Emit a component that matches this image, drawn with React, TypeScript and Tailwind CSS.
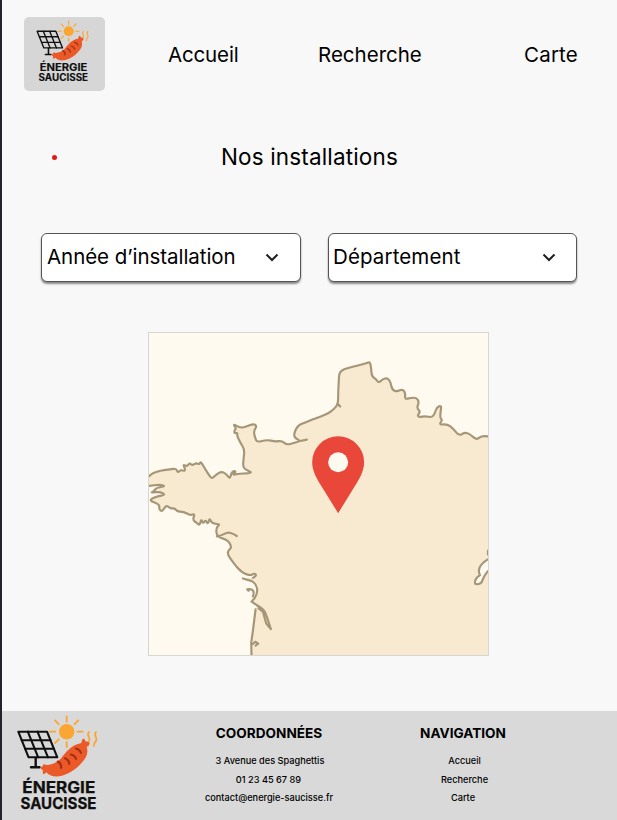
import React from "react";

function Logo({ className }: { className: string }) {
  return (
    <svg viewBox="15 8 86 98" className={"overflow-visible " + className} aria-label="Énergie Saucisse">
      <g stroke="#fba632" strokeWidth="1.8" strokeLinecap="round" fill="none">
        <path d="M66.700 11.500v5.300M66.700 37v5M50 26.700h5.300M77.500 26.700h5.200M55 15.300l3.700 3.900M78.300 15.300l-3.800 3.900M55 38l3.700-3.700" />
        <path d="M89 27c-3.500 4 2.500 5 0 9c-1.500 2-1.500 3-1 5M96 27c-3.500 4 2.500 5 0 9c-2 2-2.500 3-2 5" />
      </g>
      <circle cx="66.700" cy="26.700" r="7.700" fill="#fba632" />
      <g stroke="#101010" fill="none" strokeWidth="2.100" strokeLinejoin="round" strokeLinecap="round">
        <path d="M18.300 26.700H47L57.300 52.300H28.600Z" />
        <path d="M27.800 26.700L38.200 52.300M37.500 26.700L48 52.300M21.700 35.200H50.500M25 43.700H54" />
        <path d="M35.700 53v9.300M31 62.300h8.500" strokeWidth="2.400" />
      </g>
      <path
        d="M46 60C53 59.500 57 57.500 61 53.500C66 47 71 40 80.500 38.200C81.800 37.700 81.700 36.500 82 35C82.800 33 85.200 33.500 85 36C87 36.800 89.600 36.500 89.600 38.500C89.500 40.800 87 40.500 86.800 42C88.500 48 86.500 53 81.500 58C76 64.500 69 68.800 62 70.700C56 72.200 50 71.500 46.500 67.500C45.500 67 45 69.500 43.500 69C42 68.500 43.500 66 42.500 65C41.500 64 40.500 64 40.700 62.500C41 61.500 42.500 62 42.800 61C42.500 59.500 44.500 58.500 46 60Z"
        fill="#eb5929"
      />
      <path
        d="M57.800 56.500q4.200 2.500 3.200 6.500M65 53.300q4 1.800 4.300 5.500M70.800 49.500q4.200 .8 5.200 4.500M75.800 43.500q4 .8 5.200 4.500"
        stroke="#a52d12"
        strokeWidth="2.100"
        fill="none"
        strokeLinecap="round"
      />
      <g fill="#101010" stroke="#101010" strokeWidth="0.250" fontFamily="Inter, sans-serif" fontWeight="700" fontSize="15.500">
        <text x="22.300" y="88" textLength="73" lengthAdjust="spacingAndGlyphs">ÉNERGIE</text>
        <text x="20.500" y="103.700" textLength="76" lengthAdjust="spacingAndGlyphs">SAUCISSE</text>
      </g>
    </svg>
  );
}

/* Softens a polyline written as "x,y x,y ..." by curving through the segment midpoints. */
function smooth(points: string) {
  const p = points.split(" ").map((s) => s.split(",").map(Number));
  let d = `M${p[0][0]} ${p[0][1]}`;
  for (let i = 1; i < p.length - 1; i++) {
    const a = p[i];
    const b = p[i + 1];
    d += `Q${a[0]} ${a[1]} ${(a[0] + b[0]) / 2} ${(a[1] + b[1]) / 2}`;
  }
  const last = p[p.length - 1];
  return d + `L${last[0]} ${last[1]}`;
}

const NORTH = smooth(
  "24,455 34,445 60,436 92,432 108,430 112,443 122,434 132,438 135,432 128,417 140,424 148,413 156,421 168,413 178,418 181,408 195,432 207,451 215,461 227,449 243,439 258,446 269,462 273,443 281,437 287,440 276,450 300,445 320,445 336,442 318,434 308,426 310,400 313,372 300,352 290,330 292,322 282,324 283,314 288,310 278,295 300,308 320,303 340,295 350,302 340,318 345,338 350,351 380,343 405,349 425,346 440,359 460,353 482,347 466,339 461,330 466,312 476,299 490,293 515,283 540,274 565,263 580,252 594,236 594,200 596,165 597,144 604,134 620,127 650,120 680,112 690,108 693,128 695,152 708,160 716,172 728,160 742,157 751,168 756,192 770,198 788,190 796,203 794,221 812,217 830,216 837,230 830,248 841,258 832,270 838,275 855,272 875,276 884,265 890,245 904,240 902,255 900,278 907,284 897,298 922,296 940,310 957,332 975,320 992,328 1010,344 1026,330 1060,336"
);
const BRITTANY =
  "338,760 350,753 342,746 332,753 312,748 300,738 290,728 278,712 262,690 264,677 275,668 262,645 230,637 227,608 240,598 220,597 212,590 208,580 203,599 196,585 188,597 183,582 178,602 170,594 157,586 164,566 150,572 130,560 110,560 104,550 90,551 78,540 66,560 56,554 58,538 24,526 50,514 76,510 60,500 30,503 40,500 48,488 76,484 60,478 24,483";
const WEST_LINE = smooth(BRITTANY);
const WEST_FILL = smooth("340,820 354,800 354,780 335,768 308,762 " + BRITTANY).replace("M", "L");

function FranceMap() {
  return (
    <svg viewBox="26 21 1018 972" preserveAspectRatio="none" className="block h-full w-full">
      <rect x="0" y="0" width="1100" height="1020" fill="#fefaef" />
      <path d={NORTH + "L1060 1010L334 1010L333 955L338 920L346 855L352 845L334 832" + WEST_FILL + "Z"} fill="#f8e9d1" />
      <g fill="none" stroke="#a59677" strokeWidth="6.500" strokeLinejoin="round" strokeLinecap="round">
        <path d={NORTH} />
        <path d="M334 1000L333 955L338 920L346 855" />
        <path d="M358 848L334 832L344 820C356 800 352 780 335 770L308 762M338 816C344 800 338 792 321 795L325 799" />
        <path d={WEST_LINE} />
        <path d="M480 347L500 343M594 236L600 243M230 635C250 632 255 622 268 624Q282 627 290 634" />
        <path d="M352 845C368 850 376 862 380 878L392 915L378 898L368 862L355 852M337 960L345 953L354 959L346 965" />
        <path d="M1060 696C1022 712 1010 733 1020 752C1008 760 1002 768 1006 778C1016 782 1026 776 1028 766C1033 755 1038 742 1050 736" fill="#fefaef" />
        <path d="M1044 678V690" />
      </g>
      <path d="M594 565L551 495C532 464 516 440 516 411a78 78 0 0 1 156 0C672 440 656 464 637 495Z" fill="#e94739" />
      <circle cx="594" cy="411" r="30" fill="#fffaf0" />
    </svg>
  );
}

function Select({ label, className }: { label: string; className: string }) {
  return (
    <button
      className={
        "flex h-[49px] items-center justify-between rounded-[6px] border border-[#555] bg-white text-[20.500px] shadow-[0_2px_2px_rgba(0,0,0,0.45)] " +
        className
      }
    >
      <span className="whitespace-nowrap">{label}</span>
      <svg viewBox="0 0 14 9" className="h-[9px] w-[14px] shrink-0" fill="none" stroke="#1e1e1e" strokeWidth="2">
        <path d="M1.500 1.500L7 7L12.500 1.500" />
      </svg>
    </button>
  );
}

export default function App() {
  return (
    <div className="flex h-[820px] w-[617px] flex-col overflow-hidden border-l-2 border-[#242428] bg-[#f8f8f8] font-[Inter,sans-serif] text-black">
      <header className="flex h-[108px] shrink-0 items-center pl-[22px] text-[20.500px]">
        <div className="flex h-[74px] w-[81px] shrink-0 items-start rounded-[5px] bg-[#d6d6d6] pt-[2px] pl-[11px]">
          <Logo className="h-[64px] w-[56px]" />
        </div>
        <nav className="flex grow items-center whitespace-nowrap pt-[2px] pl-[63px]">
          <a className="w-[150px] tracking-[-0.15px]">Accueil</a>
          <a className="w-[206px]">Recherche</a>
          <a className="tracking-[0.2px]">Carte</a>
        </nav>
      </header>

      <main className="flex grow flex-col">
        <div className="flex h-[97px] items-center pl-[50px]">
          <span className="mt-px h-[5px] w-[5px] rounded-full bg-[#e5181b]" />
          <h1 className="pl-[164px] text-[22.500px] tracking-[0.15px]">Nos installations</h1>
        </div>
        <div className="mt-[28px] flex gap-[27px] pl-[39px]">
          <Select label="Année d’installation" className="w-[260px] pr-[21px] pl-[5px] tracking-[-0.05px]" />
          <Select label="Département" className="w-[249px] pr-[20px] pl-[4px] tracking-[0.120px]" />
        </div>
        <div className="mt-[50px] ml-[145.500px] h-[324px] w-[341px] border border-[#d6d6d2]">
          <FranceMap />
        </div>
      </main>

      <footer className="flex h-[109px] shrink-0 bg-[#d9d9d9] text-center">
        <Logo className="mt-[2px] ml-[13px] h-[98px] w-[86px] shrink-0" />
        <section className="ml-[88px] w-[160px] pt-[13px]">
          <h2 className="text-[13.600px] leading-[18px] font-bold">COORDONNÉES</h2>
          <ul className="mt-[10px] text-[9.200px] leading-[18.700px] font-medium">
            <li className="pl-[2px]">3 Avenue des Spaghettis</li>
            <li className="pr-[1px]">01 23 45 67 89</li>
            <li>contact@energie-saucisse.fr</li>
          </ul>
        </section>
        <section className="ml-[54px] w-[120px] pt-[13px]">
          <h2 className="text-[13.600px] leading-[18px] font-bold">NAVIGATION</h2>
          <ul className="mt-[10px] text-[9.200px] leading-[18.500px] font-medium">
            <li className="pl-[3px]">Accueil</li>
            <li className="pl-[3px]">Recherche</li>
            <li>Carte</li>
          </ul>
        </section>
      </footer>
    </div>
  );
}
